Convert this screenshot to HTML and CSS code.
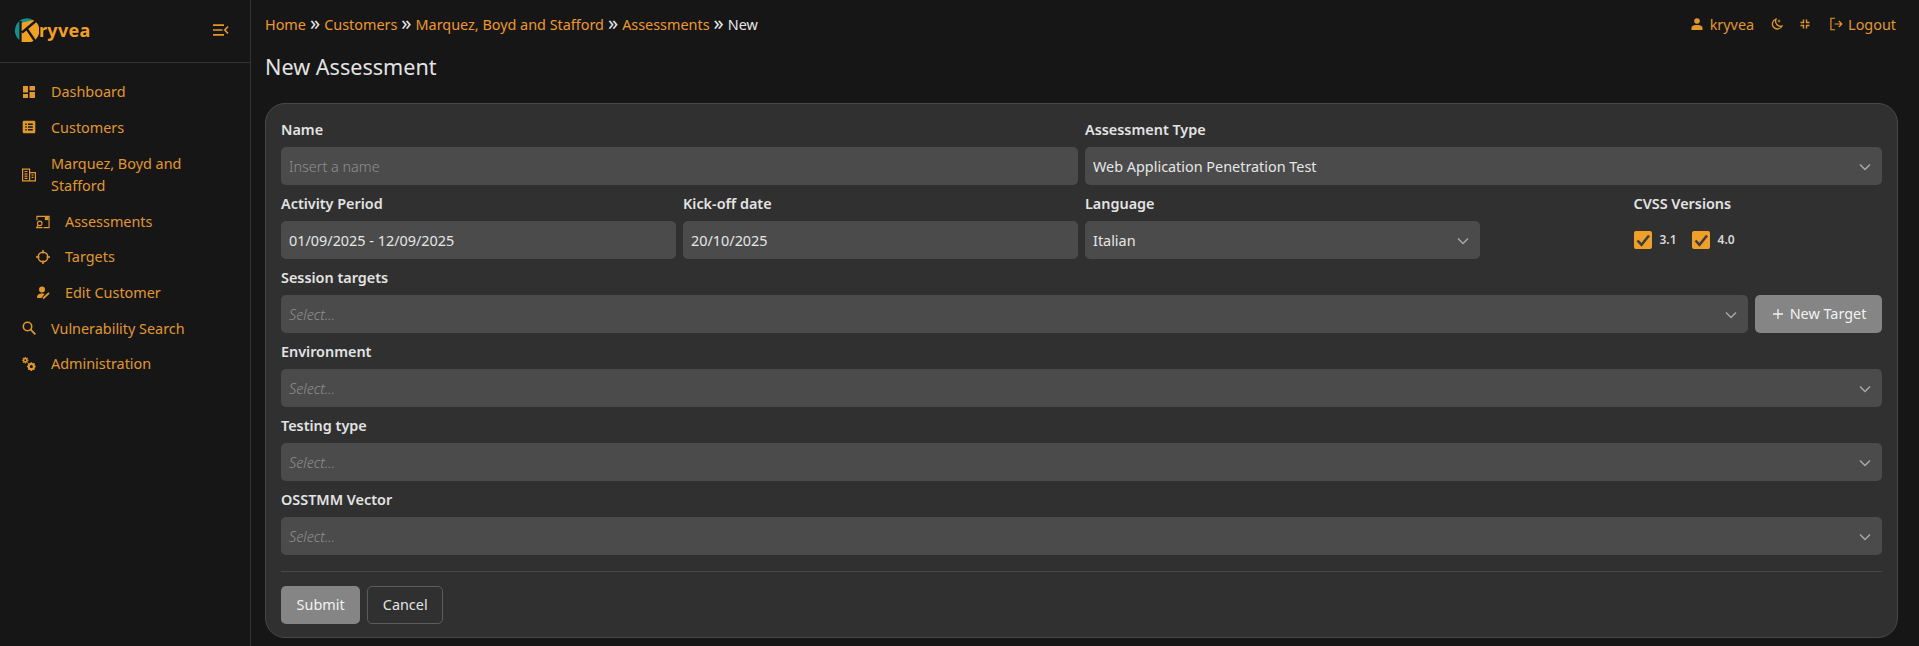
FILE: index.html
```html
<!DOCTYPE html>
<html>
<head>
	<meta charset="utf-8">
	<title>New Assessment - Kryvea</title>
	<link rel="stylesheet" href="styles.css">
</head>
<body>
	<aside class="sidebar">
		<div class="brand">
			<div class="logo">
				<svg width="26" height="26" viewBox="0 0 26 26">
					<path d="M20 3A12 12 0 1 0 8 24L10 13Z" fill="#11908f"/>
					<path d="M8 6L20 3A12 12 0 0 1 18 25L8 25Z" fill="#f2a024"/>
					<path d="M7.500 4L7.500 26M9 15.500L24 3M13.500 11.500L22 24" stroke="#161616" stroke-width="2.300" fill="none"/>
				</svg>
				<span class="logo-text">ryvea</span>
			</div>
			<svg class="icon collapse" viewBox="0 0 16 12"><path d="M0 1.200H11M0 6H9.500M0 10.800H11M15 2.500L11.800 6L15 9.500" stroke="currentColor" stroke-width="1.700" fill="none"/></svg>
		</div>
		<nav class="menu">
			<a class="item"><svg class="icon" viewBox="0 0 14 14"><path d="M1 1H6V7.500H1ZM7.500 1H13V5.500H7.500ZM7.500 7H13V13H7.500ZM1 9H6V13H1Z" fill="currentColor"/></svg><span>Dashboard</span></a>
			<a class="item"><svg class="icon" viewBox="0 0 14 14"><path fill-rule="evenodd" d="M2 .7H12A1.300 1.300 0 0 1 13.300 2V12A1.300 1.300 0 0 1 12 13.300H2A1.300 1.300 0 0 1 .7 12V2A1.300 1.300 0 0 1 2 .7ZM3.300 3.600V5H4.700V3.600ZM6 3.600V5H10.800V3.600ZM3.300 6.300V7.700H4.700V6.300ZM6 6.300V7.700H10.800V6.300ZM3.300 9V10.400H4.700V9ZM6 9V10.400H10.800V9Z" fill="currentColor"/></svg><span>Customers</span></a>
			<a class="item two-line"><svg class="icon" viewBox="0 0 14 14"><path d="M.6 1.100H7.600V12.900H.6ZM7.600 4.600H13.400V12.900H7.600ZM2.500 3.500H5.500M2.500 5.800H5.500M2.500 8.100H5.500M2.500 10.400H5.500M9.500 6.800H11.500M9.500 9.300H11.500" stroke="currentColor" stroke-width="1.200" fill="none"/></svg><span>Marquez, Boyd and Stafford</span></a>
			<a class="item sub"><svg class="icon" viewBox="0 0 15 14"><path d="M1 5V1H14V13H8" stroke="currentColor" stroke-width="1.200" fill="none"/><path d="M9.500 1.500H13.500V5H9.500Z" fill="currentColor"/><circle cx="4" cy="8.500" r="2.400" stroke="currentColor" stroke-width="1.200" fill="none"/><path d="M2.400 10.300L.6 13H7" stroke="currentColor" stroke-width="1.200" fill="none"/></svg><span>Assessments</span></a>
			<a class="item sub"><svg class="icon" viewBox="0 0 14 14"><circle cx="7" cy="7" r="4.800" stroke="currentColor" stroke-width="1.500" fill="none"/><path d="M7 0V3.500M7 10.500V14M0 7H3.500M10.500 7H14" stroke="currentColor" stroke-width="1.500"/></svg><span>Targets</span></a>
			<a class="item sub"><svg class="icon" viewBox="0 0 14 14"><circle cx="6" cy="3.500" r="3" fill="currentColor"/><path d="M1 12C1 8.500 3 7.500 6 7.500C7.500 7.500 8.500 8 8.500 8L5.500 12Z" fill="currentColor"/><path d="M7 12.500L13 7" stroke="currentColor" stroke-width="1.700"/></svg><span>Edit Customer</span></a>
			<a class="item"><svg class="icon" viewBox="0 0 14 14"><circle cx="5.500" cy="5.500" r="4.200" stroke="currentColor" stroke-width="1.600" fill="none"/><path d="M8.700 8.700L13.300 13.300" stroke="currentColor" stroke-width="1.800"/></svg><span>Vulnerability Search</span></a>
			<a class="item"><svg class="icon" viewBox="0 0 15 15"><circle cx="3.500" cy="3.500" r="1.800" stroke="currentColor" stroke-width="1.600" fill="none"/><path d="M3.500 0V1.500M3.500 5.500V7M0 3.500H1.500M5.500 3.500H7M1 1L2 2M5 5L6 6M6 1L5 2M2 5L1 6" stroke="currentColor" stroke-width="1.300"/><circle cx="10" cy="10.200" r="2.800" stroke="currentColor" stroke-width="2.200" fill="none"/><path d="M10 5.500V7.500M10 13V15M5.300 10.200H7.300M12.700 10.200H14.700M6.700 6.900L8 8.200M12 12.200L13.300 13.500M13.300 6.900L12 8.200M8 12.200L6.700 13.500" stroke="currentColor" stroke-width="1.800"/></svg><span>Administration</span></a>
		</nav>
	</aside>

	<main class="content">
		<header class="topbar">
			<div class="crumbs">
				<a>Home</a><span class="sep">»</span><a>Customers</a><span class="sep">»</span><a>Marquez, Boyd and Stafford</a><span class="sep">»</span><a>Assessments</a><span class="sep">»</span><span>New</span>
			</div>
			<div class="tools">
				<a class="tool"><svg class="icon small" viewBox="0 0 12 12"><circle cx="6" cy="3" r="2.800" fill="currentColor"/><path d="M.5 12V10C.5 7.800 3 7 6 7S11.500 7.800 11.500 10V12Z" fill="currentColor"/></svg>kryvea</a>
				<a class="tool"><svg class="icon small" viewBox="0 0 12 12"><path d="M5 1.200A5 5 0 1 0 11 8A5 5 0 0 1 5 1.200Z" stroke="currentColor" stroke-width="1.300" fill="none"/><path d="M8 1L8.500 2.500L10 3L8.500 3.500L8 5L7.500 3.500L6 3L7.500 2.500Z" fill="currentColor"/></svg></a>
				<a class="tool"><svg class="icon tiny" viewBox="0 0 10 10"><path d="M3.500.5V3.500H.5M6.500.5V3.500H9.500M3.500 9.500V6.500H.5M6.500 9.500V6.500H9.500" stroke="currentColor" stroke-width="1.400" fill="none"/></svg></a>
				<a class="tool logout"><svg class="icon" viewBox="0 0 14 14"><path d="M5.500.8H1V13.200H5.500M5 7H12.500M9.500 3.800L12.800 7L9.500 10.200" stroke="currentColor" stroke-width="1.300" fill="none"/></svg>Logout</a>
			</div>
		</header>
		<h1 class="title">New Assessment</h1>

		<form class="card">
			<div class="row two">
				<div class="field">
					<label>Name</label>
					<div class="input placeholder">Insert a name</div>
				</div>
				<div class="field">
					<label>Assessment Type</label>
					<div class="input select">Web Application Penetration Test<svg class="chev" viewBox="0 0 12 8"><path d="M1 1.500L6 6.500L11 1.500" stroke="currentColor" stroke-width="1.500" fill="none"/></svg></div>
				</div>
			</div>
			<div class="row four">
				<div class="field">
					<label>Activity Period</label>
					<div class="input">01/09/2025 - 12/09/2025</div>
				</div>
				<div class="field">
					<label>Kick-off date</label>
					<div class="input">20/10/2025</div>
				</div>
				<div class="field">
					<label>Language</label>
					<div class="input select">Italian<svg class="chev" viewBox="0 0 12 8"><path d="M1 1.500L6 6.500L11 1.500" stroke="currentColor" stroke-width="1.500" fill="none"/></svg></div>
				</div>
				<div class="field cvss">
					<div class="cvss-inner">
						<label>CVSS Versions</label>
						<div class="checks">
							<span class="check"><span class="box"><svg viewBox="0 0 18 18"><path d="M3.500 9.500L7.500 13.800L15 4.500" stroke="#3c3c3c" stroke-width="2.500" fill="none"/></svg></span>3.1</span>
							<span class="check"><span class="box"><svg viewBox="0 0 18 18"><path d="M3.500 9.500L7.500 13.800L15 4.500" stroke="#3c3c3c" stroke-width="2.500" fill="none"/></svg></span>4.0</span>
						</div>
					</div>
				</div>
			</div>
			<div class="field">
				<label>Session targets</label>
				<div class="with-btn">
					<div class="input select placeholder oblique">Select...<svg class="chev" viewBox="0 0 12 8"><path d="M1 1.500L6 6.500L11 1.500" stroke="currentColor" stroke-width="1.500" fill="none"/></svg></div>
					<button type="button" class="btn primary plus"><svg class="plus-icon" viewBox="0 0 12 12"><path d="M7 1V11M2 6H12" stroke="currentColor" stroke-width="1.300"/></svg>New Target</button>
				</div>
			</div>
			<div class="field">
				<label>Environment</label>
				<div class="input select placeholder oblique">Select...<svg class="chev" viewBox="0 0 12 8"><path d="M1 1.500L6 6.500L11 1.500" stroke="currentColor" stroke-width="1.500" fill="none"/></svg></div>
			</div>
			<div class="field">
				<label>Testing type</label>
				<div class="input select placeholder oblique">Select...<svg class="chev" viewBox="0 0 12 8"><path d="M1 1.500L6 6.500L11 1.500" stroke="currentColor" stroke-width="1.500" fill="none"/></svg></div>
			</div>
			<div class="field">
				<label>OSSTMM Vector</label>
				<div class="input select placeholder oblique">Select...<svg class="chev" viewBox="0 0 12 8"><path d="M1 1.500L6 6.500L11 1.500" stroke="currentColor" stroke-width="1.500" fill="none"/></svg></div>
			</div>
			<hr class="divider">
			<div class="actions">
				<button type="button" class="btn primary">Submit</button>
				<button type="button" class="btn outline">Cancel</button>
			</div>
		</form>
	</main>
</body>
</html>
```

FILE: styles.css
```css
*{
	margin:0;
	padding:0;
	box-sizing:border-box;
}
html,body{
	height:100%;
}
body{
	display:flex;
	background:#161616;
	color:#e3e3e3;
	font-family:"Noto Sans",sans-serif;
	font-size:14.4px;
	line-height:1.5;
	overflow:hidden;
}
.icon{
	width:14px;
	height:14px;
	flex:none;
}
.sidebar{
	width:251px;
	flex:none;
	border-right:1px solid #333;
	color:#e0982c;
}
.brand{
	height:63px;
	border-bottom:1px solid #333;
	display:flex;
	align-items:center;
	justify-content:space-between;
	padding:0 21px 2px 13px;
}
.logo{
	display:flex;
	align-items:center;
}
.logo-text{
	font-size:18px;
	font-weight:700;
	color:#f2a024;
	letter-spacing:.3px;
}
.collapse{
	width:16px;
	height:12px;
}
.menu{
	display:flex;
	flex-direction:column;
	padding-top:11px;
}
.item{
	display:flex;
	align-items:center;
	gap:15px;
	padding:7px 22px;
}
.item span{
	max-width:150px;
}
.item.two-line{
	padding:7.700px 22px;
}
.item.two-line span{
	max-width:140px;
}
.item.sub{
	padding-left:36px;
}
.content{
	flex:1;
	min-width:0;
	padding:0 21px 0 14px;
}
.topbar{
	height:49px;
	display:flex;
	align-items:center;
	justify-content:space-between;
}
.crumbs{
	color:#e6e6e6;
	display:flex;
	align-items:center;
}
.crumbs a{
	color:#f0982a;
}
.sep{
	font-size:20px;
	line-height:20px;
	margin:-3px 4px 0;
	color:#e6e6e6;
}
.tools{
	display:flex;
	align-items:center;
	gap:17px;
	color:#e0982c;
	margin-right:2px;
}
.tool{
	display:flex;
	align-items:center;
	gap:7px;
}
.tool.logout{
	gap:5px;
	margin-left:3px;
}
.tool.logout .icon{
	width:13px;
	height:14px;
}
.icon.small{
	width:12px;
	height:12px;
}
.icon.tiny{
	width:10px;
	height:10px;
}
.title{
	font-size:21.6px;
	font-weight:400;
	line-height:30px;
	margin:3px 0 21px;
}
.card{
	background:#303030;
	border:1px solid #484848;
	border-radius:20px;
	padding:15px 15px 13px;
	display:flex;
	flex-direction:column;
	gap:8px;
}
.row{
	display:grid;
	gap:7px;
}
.row.two{
	grid-template-columns:1fr 1fr;
}
.row.four{
	grid-template-columns:repeat(4,1fr);
}
.field{
	display:flex;
	flex-direction:column;
	gap:6.400px;
}
.field label{
	font-weight:600;
	color:#e3e3e3;
}
.input{
	height:38px;
	flex:none;
	background:#4b4b4b;
	border-radius:5px;
	padding:2px 8px 0;
	display:flex;
	align-items:center;
	justify-content:space-between;
	color:#e6e6e6;
}
.with-btn .input{
	flex:1;
}
.placeholder{
	color:#8f8f8f;
	font-weight:300;
}
.oblique{
	font-style:italic;
}
.chev{
	width:12px;
	height:8px;
	color:#a8a8a8;
	margin-right:3px;
}
.cvss{
	align-items:center;
}
.cvss-inner{
	display:flex;
	flex-direction:column;
	gap:6.400px;
	width:102px;
}
.checks{
	display:flex;
	gap:15px;
	height:38px;
	align-items:center;
}
.check{
	display:flex;
	align-items:center;
	gap:8px;
	font-size:12px;
	font-weight:600;
	color:#d8d8d8;
}
.box{
	width:18px;
	height:18px;
	background:#f0a028;
	border-radius:2px;
	display:flex;
}
.with-btn{
	display:flex;
	gap:7px;
}
.btn{
	height:38px;
	border-radius:5px;
	font:inherit;
	color:#f2f2f2;
	border:0;
	padding:0 15.600px;
	display:flex;
	align-items:center;
	justify-content:center;
}
.primary{
	background:#858585;
}
.plus{
	width:127px;
	flex:none;
	gap:7px;
	padding:0;
}
.plus-icon{
	width:12px;
	height:12px;
}
.outline{
	background:transparent;
	border:1px solid #5c5c5c;
	color:#e3e3e3;
	padding:0 14.600px;
}
.divider{
	border:0;
	border-top:1px solid #484848;
	margin:8px 0 6px;
}
.actions{
	display:flex;
	gap:7px;
}
```
